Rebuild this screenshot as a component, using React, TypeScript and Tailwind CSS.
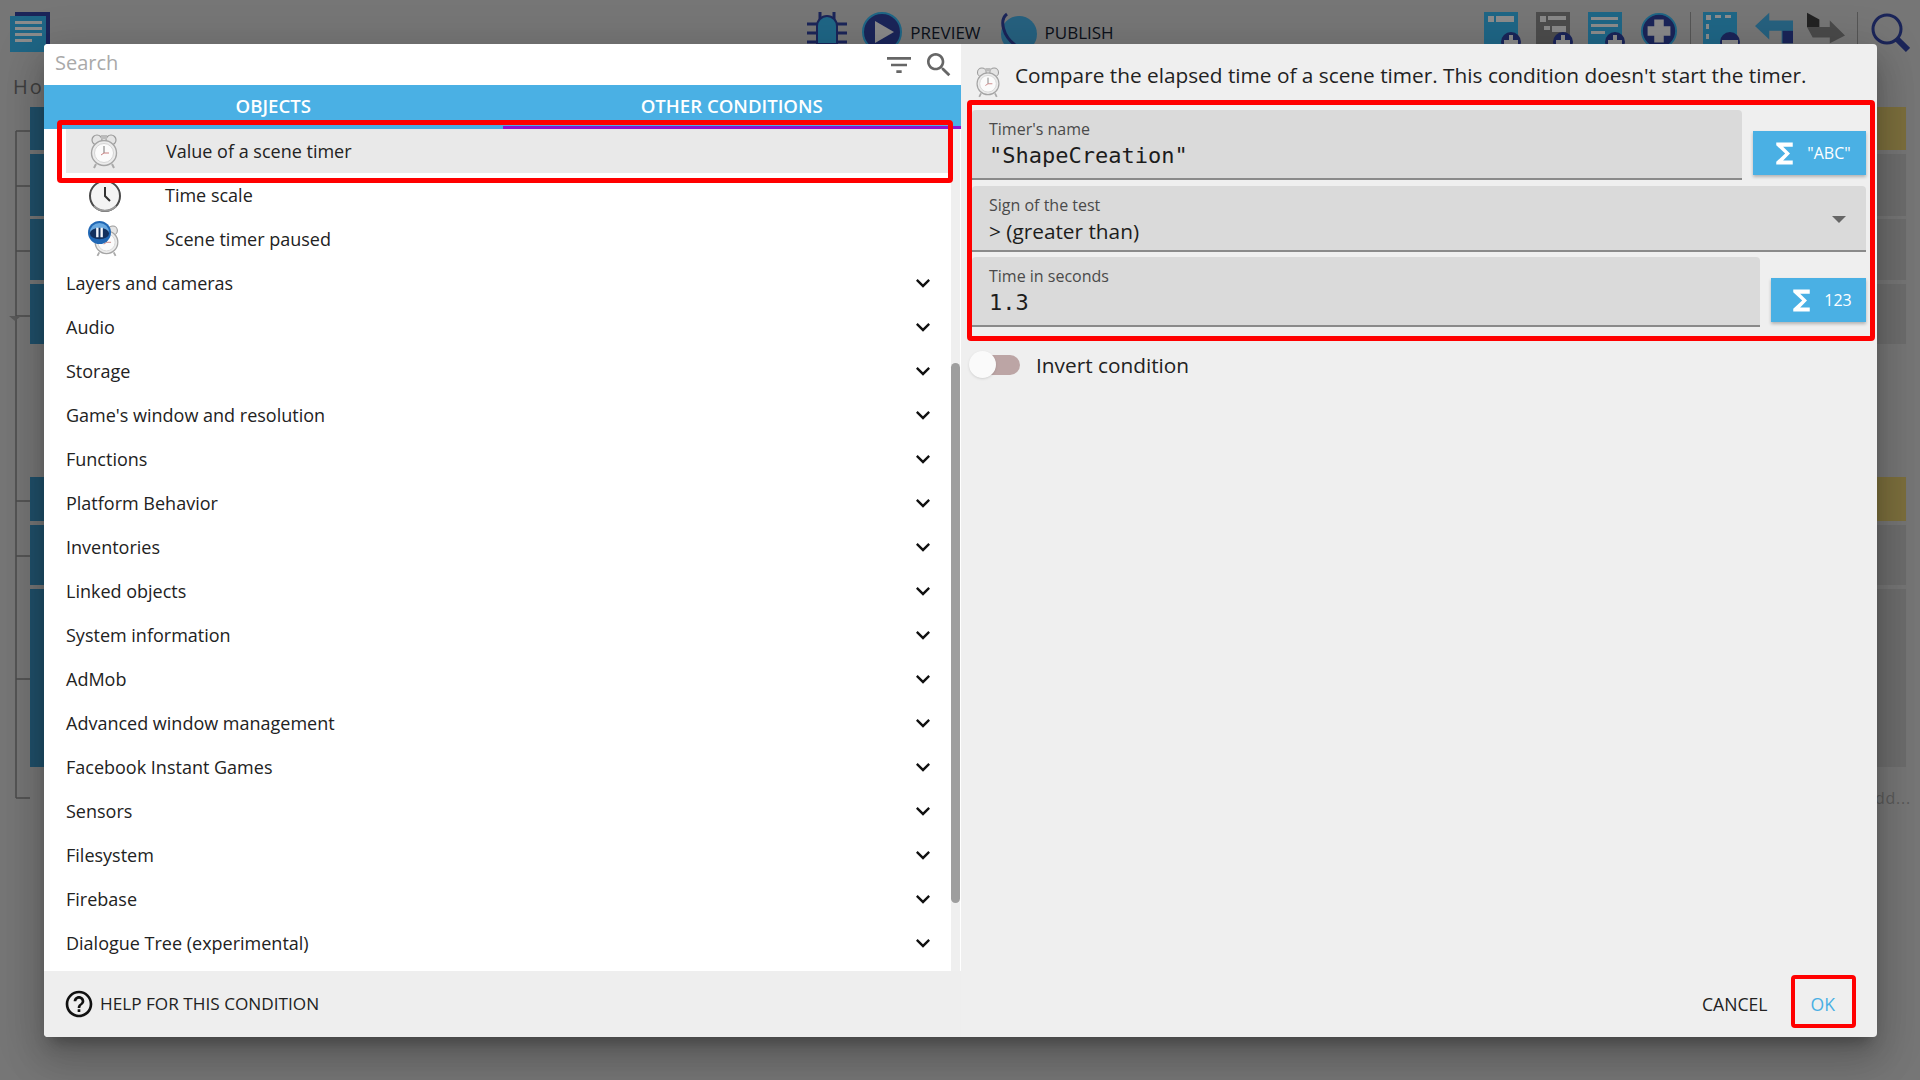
const FONT = "font-['Open_Sans',sans-serif]";

const CATEGORIES = [
  'Layers and cameras',
  'Audio',
  'Storage',
  "Game's window and resolution",
  'Functions',
  'Platform Behavior',
  'Inventories',
  'Linked objects',
  'System information',
  'AdMob',
  'Advanced window management',
  'Facebook Instant Games',
  'Sensors',
  'Filesystem',
  'Firebase',
  'Dialogue Tree (experimental)',
];

const BG_ROWS = [
  { h: 'h-[43px]', mt: 'mt-[107px]', yellow: true },
  { h: 'h-[62px]', mt: 'mt-1', yellow: false },
  { h: 'h-[61px]', mt: 'mt-[3px]', yellow: false },
  { h: 'h-[60px]', mt: 'mt-1', yellow: false },
  { h: 'h-[44px]', mt: 'mt-[133px]', yellow: true },
  { h: 'h-[60px]', mt: 'mt-1', yellow: false },
  { h: 'h-[178px]', mt: 'mt-1', yellow: false },
];

function Icon({ d, className }: { d: string; className?: string }) {
  return (
    <svg viewBox="0 0 24 24" fill="currentColor" className={className}>
      <path d={d} />
    </svg>
  );
}

function AlarmClock({ className }: { className?: string }) {
  return (
    <svg viewBox="0 0 32 36" className={className}>
      <circle cx="9" cy="7" r="5" fill="#e4e4e4" stroke="#9a9a9a" strokeWidth="1.2" />
      <circle cx="23" cy="7" r="5" fill="#e4e4e4" stroke="#9a9a9a" strokeWidth="1.2" />
      <path d="M13 2h6v4h-6z" fill="#bbb" />
      <path d="M8 31l-2 4M24 31l2 4" stroke="#aaa" strokeWidth="2" />
      <circle cx="16" cy="20" r="12.5" fill="#ececec" stroke="#a5a5a5" strokeWidth="1.4" />
      <circle cx="16" cy="20" r="9.5" fill="#fbfbfb" stroke="#d5d5d5" />
      <path d="M16 13v7" stroke="#777" strokeWidth="1" />
      <path d="M16 20h5M16 20l-3 2" stroke="#c98080" strokeWidth="1" />
    </svg>
  );
}

function WallClock({ className }: { className?: string }) {
  return (
    <svg viewBox="0 0 34 34" className={className}>
      <circle cx="17" cy="17" r="15" fill="#f4f4f4" stroke="#4a4a4a" strokeWidth="2" />
      <path d="M17 8v9l5 5" fill="none" stroke="#333" strokeWidth="2" />
      <path d="M6 27a15 15 0 0 0 22 0" fill="none" stroke="#999" strokeWidth="2" />
    </svg>
  );
}

function PausedClock({ className }: { className?: string }) {
  return (
    <div className={`relative ${className}`}>
      <AlarmClock className="absolute left-[4px] top-[3px] h-[33px] w-[29px]" />
      <svg viewBox="0 0 24 24" className="absolute left-0 top-0 h-[23px] w-[23px]">
        <circle cx="12" cy="12" r="12" fill="#2168b5" />
        <path d="M2 12a10 10 0 0 1 20 0z" fill="#6aa9e0" />
        <ellipse cx="12" cy="13" rx="10" ry="6" fill="#12305e" />
        <path d="M8.5 7h2.5v10H8.5zM13 7h2.5v10H13z" fill="#f3f6fb" />
      </svg>
    </div>
  );
}

function SumButton({ label, className }: { label: string; className: string }) {
  return (
    <div className={`flex h-11 items-center justify-center gap-[6px] bg-[#4ab0e4] text-white shadow-[0_2px_3px_rgba(0,0,0,0.25)] ${className}`}>
      <Icon d="M18 4H6v2l6.5 6L6 18v2h12v-3h-7l5-5-5-5h7z" className="h-[33px] w-[33px]" />
      <span className="text-base">{label}</span>
    </div>
  );
}

function Field({ label, value, mono, className }: { label: string; value: string; mono?: boolean; className: string }) {
  return (
    <div className={`rounded-t border-b-2 border-[#8a8a8a] bg-[#dadada] pl-[17px] ${className}`}>
      <div className="pt-[9px] text-base leading-5 text-[#4a4a4a]">{label}</div>
      <div className={mono ? "mt-[3px] font-['DejaVu_Sans_Mono',monospace] text-[22px] leading-7 text-[#1c1c1c]" : 'mt-[2px] text-[20.8px] leading-7 text-[#1c1c1c]'}>
        {value}
      </div>
    </div>
  );
}

function ListRow({ label }: { label: string }) {
  return (
    <div className="flex h-11 items-center justify-between pl-[22px] pr-[14px] text-lg text-[#222]">
      <span>{label}</span>
      <Icon d="M16.59 8.59L12 13.17 7.41 8.59 6 10l6 6 6-6z" className="h-7 w-7 text-[#111]" />
    </div>
  );
}

function ToolIcon({ kind }: { kind: 'a' | 'b' | 'c' | 'd' }) {
  const fill = kind === 'b' ? '#4c4c4c' : '#1f6686';
  return (
    <svg viewBox="0 0 38 38" className="h-[38px] w-[38px]">
      <path d="M0 0h34v34H0z" fill={fill} />
      {kind === 'a' && <path d="M4 4h6v6H4zM12 4h18v6H12z" fill="#8c8c8c" />}
      {kind === 'b' && <path d="M4 4h6v6H4zM12 4h18v4H12zM8 14h6v4H8zM16 14h14v6H16z" fill="#888" />}
      {kind === 'c' && <path d="M3 5h27v3H3zM3 12h27v3H3zM3 19h14v3H3z" fill="#8c8c8c" />}
      {kind === 'd' && <path d="M3 3h5v5H3zM12 3h6v3h-6zM22 3h6v3h-6zM3 12h3v5H3zM3 22h3v5H3z" fill="#8c8c8c" />}
      <circle cx="27" cy="30" r="10" fill="#1b2559" />
      <path d={kind === 'd' ? 'M19 28h16v4H19z' : 'M25 23h4v5h5v4h-5v5h-4v-5h-5v-4h5z'} fill="#8a8a8a" />
    </svg>
  );
}

function Background() {
  return (
    <div className="h-[1080px] w-[1920px] overflow-hidden bg-[#767676]">
      <div className="relative">
        <svg viewBox="0 0 30 800" className="absolute left-0 top-0 h-[800px] w-[30px]">
          <path d="M16 131v667M16 131h14M16 186h14M16 251h14M16 316h14M16 501h14M16 556h14M16 679h14M16 798h14" fill="none" stroke="#4b4b4b" strokeWidth="1.5" />
          <path d="M9 316h12l-6 5z" fill="#5a5a5a" />
        </svg>
        <div className="absolute left-[30px] top-0 w-[1876px]">
          {BG_ROWS.map((r, i) => (
            <div key={i} className={`flex ${r.h} ${r.mt}`}>
              <div className="w-[200px] bg-[#20506a]" />
              <div className={`flex-1 ${r.yellow ? 'bg-[#7c6f3d]' : 'bg-[#6d6d6d]'}`} />
            </div>
          ))}
        </div>
        <div className="absolute left-[1864px] top-[786px] text-base tracking-wider text-[#5a5a5a]">Add...</div>
        <div className="absolute left-[13px] top-[73px] text-xl tracking-widest text-[#3f3f3f]">Home</div>
      </div>
      <div className="flex items-start justify-between px-[10px] pt-[12px]">
        <svg viewBox="0 0 40 40" className="h-10 w-10">
          <path d="M5 0h35v32H5z" fill="#1b2559" />
          <path d="M0 4h36v36H0z" fill="#1f6686" />
          <path d="M5 9h27v3H5zM5 15h27v3H5zM5 21h27v3H5zM5 27h17v3H5z" fill="#8c8c8c" />
        </svg>
        <div className="ml-[387px] flex items-start text-[17px] text-[#0c111a]">
          <svg viewBox="0 0 40 32" className="mr-[15px] h-8 w-10">
            <path d="M13 0v8M27 0v8M0 12h10M30 12h10M0 21h10M30 21h10M0 30h10M30 30h10" stroke="#1b2559" strokeWidth="3" />
            <path d="M10 14a10 10 0 0 1 20 0v18H10z" fill="#1f6686" stroke="#1b2559" strokeWidth="2" />
          </svg>
          <svg viewBox="0 0 40 40" className="h-10 w-10">
            <circle cx="20" cy="20" r="19" fill="#1b2559" stroke="#1f6686" strokeWidth="2" />
            <path d="M13 9l19 11-19 11z" fill="#8a8a8a" />
          </svg>
          <span className="ml-2 mt-[9px] leading-6">PREVIEW</span>
          <svg viewBox="0 0 40 40" className="ml-4 h-10 w-10">
            <circle cx="22" cy="22" r="18" fill="#26617f" />
            <path d="M10 2C2 8 6 24 18 33c6 4 12 5 16 5" fill="none" stroke="#1b2559" strokeWidth="3" />
          </svg>
          <span className="ml-2 mt-[9px] leading-6">PUBLISH</span>
        </div>
        <div className="flex items-start gap-[14px]">
          <ToolIcon kind="a" />
          <ToolIcon kind="b" />
          <ToolIcon kind="c" />
          <svg viewBox="0 0 40 40" className="h-[38px] w-[38px]">
            <circle cx="20" cy="20" r="18" fill="#1b2559" stroke="#1f6686" strokeWidth="2" />
            <path d="M15 8h10v7h7v10h-7v7H15v-7H8V15h7z" fill="#8a8a8a" />
          </svg>
          <div className="mx-[-2px] h-8 w-px bg-[#555]" />
          <ToolIcon kind="d" />
          <svg viewBox="0 0 40 32" className="h-8 w-[38px]">
            <path d="M0 14L15 0v8h25v24H28V19H15v9z" fill="#26617f" />
            <path d="M29 19h11v13H29z" fill="#1b2559" />
          </svg>
          <svg viewBox="0 0 40 32" className="h-8 w-[38px]">
            <path d="M0 0l13 7v8H0z" fill="#222" />
            <path d="M0 15h24V8l16 16-16 8v-6H6z" fill="#4a4a4a" />
          </svg>
          <div className="mx-[-2px] h-8 w-px bg-[#555]" />
          <svg viewBox="0 0 40 44" className="h-11 w-10">
            <circle cx="17" cy="17" r="14" fill="#767676" stroke="#1b2559" strokeWidth="3" />
            <path d="M27 27l11 11" stroke="#1b2559" strokeWidth="6" />
          </svg>
        </div>
      </div>
    </div>
  );
}

export default function App() {
  return (
    <div className={`relative h-[1080px] w-[1920px] overflow-hidden ${FONT}`}>
      <Background />

      <div className="absolute left-[44px] top-[44px] flex h-[993px] w-[1833px] overflow-hidden rounded bg-[#efefef] shadow-[0_11px_15px_-7px_rgba(0,0,0,0.3),0_24px_38px_3px_rgba(0,0,0,0.14),0_9px_46px_8px_rgba(0,0,0,0.12)]">
        <div className="flex w-[917px] flex-col">
          <div className="flex h-[41px] items-center justify-between bg-white pb-1 pl-[11px] pr-[6px]">
            <span className="text-xl text-[#a9a9a9]">Search</span>
            <div className="flex items-center gap-[8px] pt-1 text-[#666]">
              <Icon d="M10 18h4v-2h-4v2zM3 6v2h18V6H3zm3 7h12v-2H6v2z" className="h-8 w-8" />
              <Icon d="M15.5 14h-.79l-.28-.27C15.41 12.59 16 11.11 16 9.5 16 5.91 13.09 3 9.5 3S3 5.91 3 9.5 5.91 16 9.5 16c1.61 0 3.09-.59 4.23-1.57l.27.28v.79l5 4.99L20.49 19l-4.99-5zm-6 0C7.01 14 5 11.99 5 9.5S7.01 5 9.5 5 14 7.01 14 9.5 11.99 14 9.5 14z" className="h-8 w-8" />
            </div>
          </div>

          <div className="flex h-[44px] bg-[#4ab0e4] text-[18.6px] font-semibold text-white">
            <div className="flex flex-1 items-center justify-center pb-[3px]">OBJECTS</div>
            <div className="flex flex-1 items-center justify-center border-b-[3px] border-[#9013d0]">OTHER CONDITIONS</div>
          </div>

          <div className="flex flex-1 overflow-hidden bg-white pr-px">
            <div className="flex-1">
              <div className="ml-[22px] flex h-11 items-center bg-[#e9e9e9] text-lg text-[#222]">
                <AlarmClock className="ml-[22px] h-[36px] w-[32px]" />
                <span className="ml-[46px]">Value of a scene timer</span>
              </div>
              <div className="flex h-11 items-center text-lg text-[#222]">
                <WallClock className="ml-[44px] mt-[2px] h-[34px] w-[34px]" />
                <span className="ml-[43px]">Time scale</span>
              </div>
              <div className="flex h-11 items-center text-lg text-[#222]">
                <PausedClock className="ml-[44px] h-[36px] w-[33px]" />
                <span className="ml-[44px]">Scene timer paused</span>
              </div>
              {CATEGORIES.map((c) => (
                <ListRow key={c} label={c} />
              ))}
            </div>
            <div className="w-[9px] bg-[#efefef] pt-[234px]">
              <div className="h-[540px] rounded-t-md rounded-b-md bg-[#9e9e9e]" />
            </div>
          </div>

          <div className="flex h-[66px] items-center gap-[5px] bg-[#eeeeee] pl-[19px] text-[17.2px] text-[#222]">
            <Icon d="M11 18h2v-2h-2v2zm1-16C6.48 2 2 6.48 2 12s4.48 10 10 10 10-4.48 10-10S17.52 2 12 2zm0 18c-4.41 0-8-3.59-8-8s3.59-8 8-8 8 3.59 8 8-3.59 8-8 8zm0-14c-2.21 0-4 1.79-4 4h2c0-1.1.9-2 2-2s2 .9 2 2c0 2-3 1.75-3 5h2c0-2.25 3-2.5 3-5 0-2.21-1.79-4-4-4z" className="h-8 w-8 text-[#111]" />
            <span>HELP FOR THIS CONDITION</span>
          </div>
        </div>

        <div className="flex flex-1 flex-col pl-[11px] pr-[11px]">
          <div className="flex h-[66px] items-start pt-[17px]">
            <AlarmClock className="ml-[2px] mt-[5px] h-[32px] w-[28px]" />
            <span className="ml-[13px] text-[20.8px] leading-7 text-[#222]">Compare the elapsed time of a scene timer. This condition doesn't start the timer.</span>
          </div>
          <div className="flex items-end justify-between">
            <Field label="Timer's name" value={'"ShapeCreation"'} mono className="h-[70px] w-[770px]" />
            <SumButton label={'"ABC"'} className="mb-[5px] w-[113px]" />
          </div>
          <div className="relative mt-[6px]">
            <Field label="Sign of the test" value="> (greater than)" className="h-[66px] w-[894px]" />
            <div className="absolute right-[20px] top-[30px] h-0 w-0 border-x-[7px] border-t-[7px] border-x-transparent border-t-[#666]" />
          </div>
          <div className="mt-[5px] flex items-end justify-between">
            <Field label="Time in seconds" value="1.3" mono className="h-[70px] w-[788px]" />
            <SumButton label="123" className="mb-[5px] w-[95px]" />
          </div>
          <div className="mt-[24px] flex items-center">
            <div className="relative ml-[-3px] h-[20px] w-[51px]">
              <div className="ml-[2px] h-[20px] w-[49px] rounded-full bg-[#bca5a5]" />
              <div className="absolute left-0 top-[-4px] h-[27px] w-[27px] rounded-full bg-[#fafafa] shadow" />
            </div>
            <span className="ml-[16px] text-[20.8px] leading-7 text-[#222]">Invert condition</span>
          </div>
          <div className="mt-auto flex h-[66px] items-center justify-end gap-[43px] pr-[31px] text-[17.6px]">
            <span className="text-[#222]">CANCEL</span>
            <span className="text-[#4ab0e4]">OK</span>
          </div>
        </div>
      </div>

      {/* red annotation boxes */}
      <div className="absolute left-[57px] top-[120px] h-[63px] w-[896px] rounded-sm border-[5px] border-[#ff0000]" />
      <div className="absolute left-[967px] top-[100px] h-[241px] w-[908px] rounded-sm border-[5px] border-[#ff0000]" />
      <div className="absolute left-[1791px] top-[975px] h-[53px] w-[65px] rounded-sm border-[4px] border-[#ff0000]" />
    </div>
  );
}
